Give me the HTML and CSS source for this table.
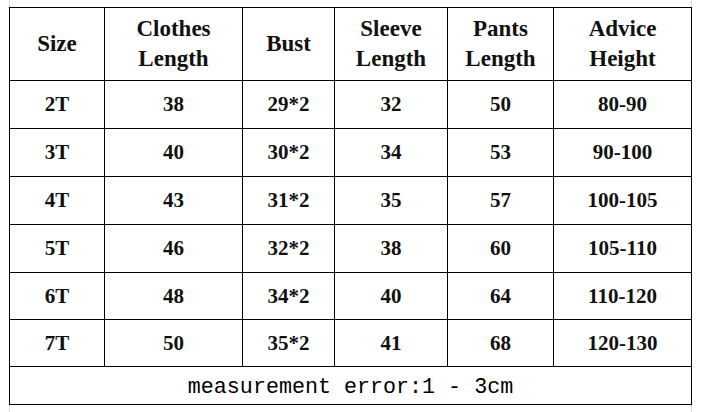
FILE: index.html
```html
<!DOCTYPE html>
<html>
<head>
<meta charset="utf-8">
<link rel="stylesheet" href="styles.css">
</head>
<body>
<div class="frame">
  <div class="sheet">
    <div class="cell head">Size</div>
    <div class="cell head">Clothes<br>Length</div>
    <div class="cell head">Bust</div>
    <div class="cell head">Sleeve<br>Length</div>
    <div class="cell head">Pants<br>Length</div>
    <div class="cell head">Advice<br>Height</div>

    <div class="cell">2T</div><div class="cell">38</div><div class="cell">29*2</div><div class="cell">32</div><div class="cell">50</div><div class="cell">80-90</div>
    <div class="cell">3T</div><div class="cell">40</div><div class="cell">30*2</div><div class="cell">34</div><div class="cell">53</div><div class="cell">90-100</div>
    <div class="cell">4T</div><div class="cell">43</div><div class="cell">31*2</div><div class="cell">35</div><div class="cell">57</div><div class="cell">100-105</div>
    <div class="cell">5T</div><div class="cell">46</div><div class="cell">32*2</div><div class="cell">38</div><div class="cell">60</div><div class="cell">105-110</div>
    <div class="cell">6T</div><div class="cell">48</div><div class="cell">34*2</div><div class="cell">40</div><div class="cell">64</div><div class="cell">110-120</div>
    <div class="cell">7T</div><div class="cell">50</div><div class="cell">35*2</div><div class="cell">41</div><div class="cell">68</div><div class="cell">120-130</div>

    <div class="cell note">measurement error:1 - 3cm</div>
  </div>
</div>
</body>
</html>
```
FILE: styles.css
```css
html, body {
  margin: 0;
  padding: 0;
  background: #fff;
}
body {
  width: 704px;
  height: 412px;
  overflow: hidden;
}
.frame {
  margin-left: 9px;
  width: 683px;
  height: 412px;
  padding-top: 7px;
  box-sizing: border-box;
  background:
    linear-gradient(#dcdcdc, #dcdcdc) left top / 1px 100% no-repeat,
    linear-gradient(#dcdcdc, #dcdcdc) right top / 1px 100% no-repeat;
}
.sheet {
  display: grid;
  grid-template-columns: 94px 137px 91px 112px 105px 137px;
  grid-template-rows: 72px 47px 47px 47px 47px 46px 46px 37px;
  gap: 1px;
  background: #000;
  border: 1px solid #000;
}
.cell {
  background: #fff;
  display: flex;
  align-items: center;
  justify-content: center;
  text-align: center;
  font-family: "Liberation Serif", "Times New Roman", serif;
  font-weight: bold;
  font-size: 21px;
  color: #111;
}
.head {
  font-size: 23px;
  line-height: 30px;
}
.note {
  grid-column: 1 / -1;
  font-family: "Liberation Mono", "Courier New", monospace;
  font-weight: normal;
  font-size: 21.7px;
  padding-top: 4px;
  color: #000;
}
```
